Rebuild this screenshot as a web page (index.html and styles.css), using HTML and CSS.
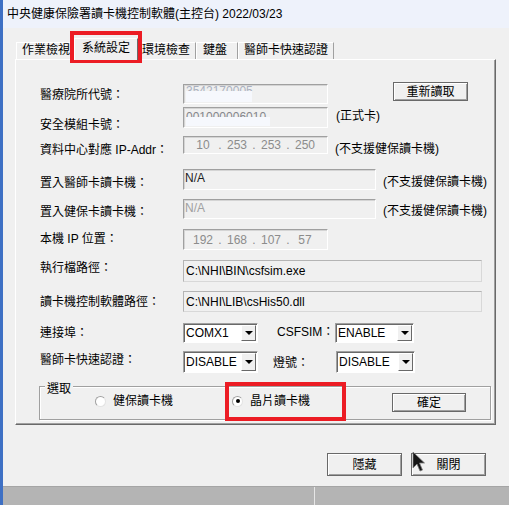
FILE: index.html
```html
<!DOCTYPE html>
<html lang="zh-Hant">
<head>
<meta charset="UTF-8">
<meta name="viewport" content="width=device-width, initial-scale=1.0">
<title>中央健康保險署讀卡機控制軟體</title>
<link rel="stylesheet" href="styles.css">
</head>
<body>
<div class="window">
    <div class="titlebar">中央健康保險署讀卡機控制軟體(主控台) 2022/03/23</div>

    <div class="client">
        <div class="tabs">
            <div class="tab">作業檢視</div>
            <div class="tab tab-active">系統設定</div>
            <div class="tab">環境檢查</div>
            <div class="tab tab-short">鍵盤</div>
            <div class="tab">醫師卡快速認證</div>
        </div>

        <div class="panel">
            <div class="row r1">
                <span class="label">醫療院所代號：</span>
                <div class="field masked w-short">
                    <span class="peek">3542170005</span>
                    <span class="cover"></span>
                </div>
                <button class="btn btn-reload">重新讀取</button>
            </div>

            <div class="row r2">
                <span class="label">安全模組卡號：</span>
                <div class="field masked w-short">
                    <span class="peek peek-dark">001000006010</span>
                    <span class="cover cover-wide"></span>
                </div>
                <span class="note">(正式卡)</span>
            </div>

            <div class="row r3">
                <span class="label">資料中心對應 IP-Addr：</span>
                <div class="field ip w-short">
                    <span class="oct">10</span><span class="dot">.</span><span class="oct">253</span><span class="dot">.</span><span class="oct">253</span><span class="dot">.</span><span class="oct">250</span>
                </div>
                <span class="note">(不支援健保讀卡機)</span>
            </div>

            <div class="row r4">
                <span class="label">置入醫師卡讀卡機：</span>
                <div class="field text-top w-mid">N/A</div>
                <span class="note">(不支援健保讀卡機)</span>
            </div>

            <div class="row r5">
                <span class="label">置入健保卡讀卡機：</span>
                <div class="field text-top disabled w-mid">N/A</div>
                <span class="note">(不支援健保讀卡機)</span>
            </div>

            <div class="row r6">
                <span class="label">本機 IP 位置：</span>
                <div class="field ip w-short">
                    <span class="oct">192</span><span class="dot">.</span><span class="oct">168</span><span class="dot">.</span><span class="oct">107</span><span class="dot">.</span><span class="oct">57</span>
                </div>
            </div>

            <div class="row r7">
                <span class="label">執行檔路徑：</span>
                <div class="field flat w-long">C:\NHI\BIN\csfsim.exe</div>
            </div>

            <div class="row r8">
                <span class="label">讀卡機控制軟體路徑：</span>
                <div class="field flat w-long">C:\NHI\LIB\csHis50.dll</div>
            </div>

            <div class="row r9">
                <span class="label">連接埠：</span>
                <div class="select sel-left">
                    <span class="value">COMX1</span>
                    <span class="arrow"></span>
                </div>
                <span class="inline-label">CSFSIM：</span>
                <div class="select sel-right">
                    <span class="value">ENABLE</span>
                    <span class="arrow"></span>
                </div>
            </div>

            <div class="row r10">
                <span class="label">醫師卡快速認證：</span>
                <div class="select sel-left">
                    <span class="value">DISABLE</span>
                    <span class="arrow"></span>
                </div>
                <span class="inline-label">燈號：</span>
                <div class="select sel-right">
                    <span class="value">DISABLE</span>
                    <span class="arrow"></span>
                </div>
            </div>

            <div class="group">
                <span class="group-title">選取</span>
                <label class="radio radio-first"><span class="circle"></span>健保讀卡機</label>
                <label class="radio radio-second"><span class="circle checked"></span>晶片讀卡機</label>
                <button class="btn btn-ok">確定</button>
            </div>
        </div>

        <div class="actions">
            <button class="btn">隱藏</button>
            <button class="btn">關閉</button>
        </div>
    </div>

    <div class="statusbar">
        <div class="status-cell"></div>
    </div>

    <!-- annotation boxes on top of the screenshot -->
    <div class="mark mark-tab"></div>
    <div class="mark mark-radio"></div>

    <svg class="cursor" width="14" height="22" viewBox="0 0 14 22">
        <path d="M1 1 L1 17 L5 13 L8 20 L10.5 19 L7.5 12 L12.5 12 Z" fill="#151515" stroke="#7a7a7a" stroke-width="0.8"/>
    </svg>
</div>
</body>
</html>
```

FILE: styles.css
```css
* {
    box-sizing: border-box;
}

body {
    margin: 0;
    background: #f0f0f0;
    font-family: "Liberation Sans", "Noto Sans CJK TC", sans-serif;
    font-size: 12px;
    color: #000;
}

.window {
    position: relative;
    width: 509px;
    height: 505px;
    border-left: 3px solid #3e70c4;
    background: #f0f0f0;
    overflow: hidden;
}

.titlebar {
    height: 28px;
    line-height: 28px;
    padding-left: 4px;
    background: #eef2fb;
    white-space: nowrap;
}

.client {
    height: 458px;
    padding: 10px 0 0 12px;
}

/* tabs */
.tabs {
    display: flex;
    align-items: flex-end;
    height: 21px;
    margin-left: 1px;
}

.tab {
    height: 17px;
    line-height: 15px;
    padding: 0 5px;
    border-top: 1px solid #fff;
    border-left: 1px solid #fff;
    border-right: 1px solid #a0a0a0;
    white-space: nowrap;
}

.tab-short {
    padding: 0 10px 0 6px;
}

.tab-active {
    position: relative;
    z-index: 1;
    height: 22px;
    line-height: 19px;
    margin: 0 -2px -1px;
    padding: 0 7px;
    background: #f0f0f0;
    border-right-color: #696969;
}

/* tab page */
.panel {
    width: 481px;
    height: 366px;
    padding: 24px 0 0 24px;
    border: 1px solid;
    border-color: #fff #696969 #696969 #fff;
    box-shadow: inset -1px -1px 0 #a0a0a0;
}

.row {
    display: flex;
    align-items: flex-start;
}

.label {
    flex: none;
    width: 143px;
    line-height: 14px;
    white-space: nowrap;
}

.note,
.inline-label {
    flex: none;
    line-height: 14px;
    white-space: nowrap;
}

.r1 { height: 20px; }
.r2 { height: 21px; margin-top: 3px; }
.r3 { height: 18px; margin-top: 8px; }
.r4 { height: 21px; margin-top: 15px; }
.r5 { height: 20px; margin-top: 9px; }
.r6 { height: 21px; margin-top: 10px; }
.r7 { height: 22px; margin-top: 10px; }
.r8 { height: 21px; margin-top: 9px; }
.r9 { height: 20px; margin-top: 11px; }
.r10 { height: 22px; margin-top: 8px; }

.r1 .label { margin-top: 4px; }
.r2 .label { margin-top: 11px; }
.r3 .label { margin-top: 7px; }
.r4 .label { margin-top: 7px; }
.r5 .label { margin-top: 6px; }
.r6 .label { margin-top: 3px; }
.r7 .label { margin-top: 1px; }
.r8 .label { margin-top: 4px; }
.r9 .label { margin-top: 3px; }
.r10 .label { margin-top: 2px; }

.r2 .note { margin: 2px 0 0 8px; }
.r3 .note { margin: 6px 0 0 7px; }
.r4 .note { margin: 6px 0 0 7px; }
.r5 .note { margin: 5px 0 0 7px; }

/* text boxes */
.field {
    flex: none;
    align-self: stretch;
    display: flex;
    align-items: center;
    padding-left: 1px;
    background: #f0f0f0;
    border: 1px solid;
    border-color: #a0a0a0 #fff #fff #a0a0a0;
    box-shadow: inset 1px 1px 0 #d4d4d4;
    white-space: nowrap;
    overflow: hidden;
}

.w-short { width: 145px; }
.w-mid { width: 193px; }
.w-long { width: 299px; }

.text-top {
    align-items: flex-start;
    padding-top: 1px;
    line-height: 14px;
    color: #1e1e1e;
}

.disabled {
    color: #a0a0a0;
}

.flat {
    padding-left: 2px;
    border-color: #b4b4b4 #d8d8d8 #d8d8d8 #b4b4b4;
    box-shadow: none;
}

.ip {
    padding-left: 5px;
    color: #8c8c8c;
}

.ip .oct {
    width: 28px;
    text-align: center;
}

.ip .dot {
    width: 6px;
    text-align: center;
}

.masked {
    display: block;
    padding-left: 2px;
}

.peek {
    display: block;
    height: 6px;
    line-height: 12px;
    overflow: hidden;
    color: #aab0bf;
}

.peek-dark {
    margin-top: 3px;
    color: #84868d;
}

.cover {
    display: block;
    width: 66px;
    height: 11px;
    background: #f6f8fd;
}

.cover-wide {
    width: 84px;
    height: 9px;
}

/* combo boxes */
.select {
    flex: none;
    align-self: stretch;
    display: flex;
    background: #fff;
    border: 1px solid;
    border-color: #a0a0a0 #fff #fff #a0a0a0;
    box-shadow: inset 1px 1px 0 #696969;
}

.sel-left { width: 75px; }
.sel-right { width: 79px; }

.select .value {
    flex: 1;
    display: flex;
    align-items: center;
    padding-left: 2px;
    white-space: nowrap;
}

.select .arrow {
    width: 15px;
    margin: 1px 1px 1px 0;
    display: flex;
    align-items: center;
    justify-content: center;
    background: #f0f0f0;
    border: 1px solid;
    border-color: #fff #696969 #696969 #fff;
}

.select .arrow::after {
    content: "";
    border-left: 4px solid transparent;
    border-right: 4px solid transparent;
    border-top: 4px solid #000;
}

.r9 .inline-label { width: 58px; margin: 2px 0 0 19px; }
.r10 .inline-label { width: 63px; margin: 5px 0 0 15px; }

/* buttons */
.btn {
    flex: none;
    width: 75px;
    height: 23px;
    padding: 0;
    font: inherit;
    line-height: 14px;
    color: #000;
    background: #f0f0f0;
    border: 1px solid #696969;
    box-shadow: inset 1px 1px 0 #fff, inset -1px -1px 0 #a0a0a0;
}

.btn-reload {
    height: 19px;
    margin: -2px 0 0 65px;
}

/* radio group */
.group {
    position: relative;
    width: 452px;
    height: 34px;
    margin: 13px 0 0 -1px;
    padding-top: 6px;
    display: flex;
    align-items: flex-start;
    border: 1px solid #a0a0a0;
    box-shadow: inset 1px 1px 0 #fff, 1px 1px 0 #fff;
}

.group-title {
    position: absolute;
    top: -5px;
    left: 5px;
    padding: 0 2px;
    line-height: 14px;
    background: #f0f0f0;
}

.radio {
    display: flex;
    align-items: center;
    gap: 7px;
    margin-top: 1px;
    line-height: 14px;
    white-space: nowrap;
}

.radio-first { margin-left: 55px; }
.radio-second { margin-left: 59px; }

.circle {
    width: 11px;
    height: 11px;
    display: flex;
    align-items: center;
    justify-content: center;
    border-radius: 50%;
    background: #fff;
    border: 1px solid;
    border-color: #a0a0a0 #e3e3e3 #e3e3e3 #a0a0a0;
}

.circle.checked::after {
    content: "";
    width: 4px;
    height: 4px;
    border-radius: 50%;
    background: #000;
}

.btn-ok {
    width: 74px;
    height: 19px;
    margin-left: 82px;
}

/* bottom buttons */
.actions {
    display: flex;
    justify-content: flex-end;
    gap: 9px;
    margin-top: 28px;
    padding-right: 23px;
}

.statusbar {
    height: 19px;
    background: #b4b4b4;
    border-top: 1px solid #a5a5a5;
}

.status-cell {
    width: 312px;
    height: 100%;
    border-right: 1px solid #e6e6e6;
}

/* red highlight boxes */
.mark {
    position: absolute;
    border: 4px solid #ec1c24;
}

.mark-tab {
    left: 67px;
    top: 31px;
    width: 72px;
    height: 32px;
}

.mark-radio {
    left: 222px;
    top: 382px;
    width: 121px;
    height: 39px;
}

.cursor {
    position: absolute;
    left: 409px;
    top: 451px;
}
```
